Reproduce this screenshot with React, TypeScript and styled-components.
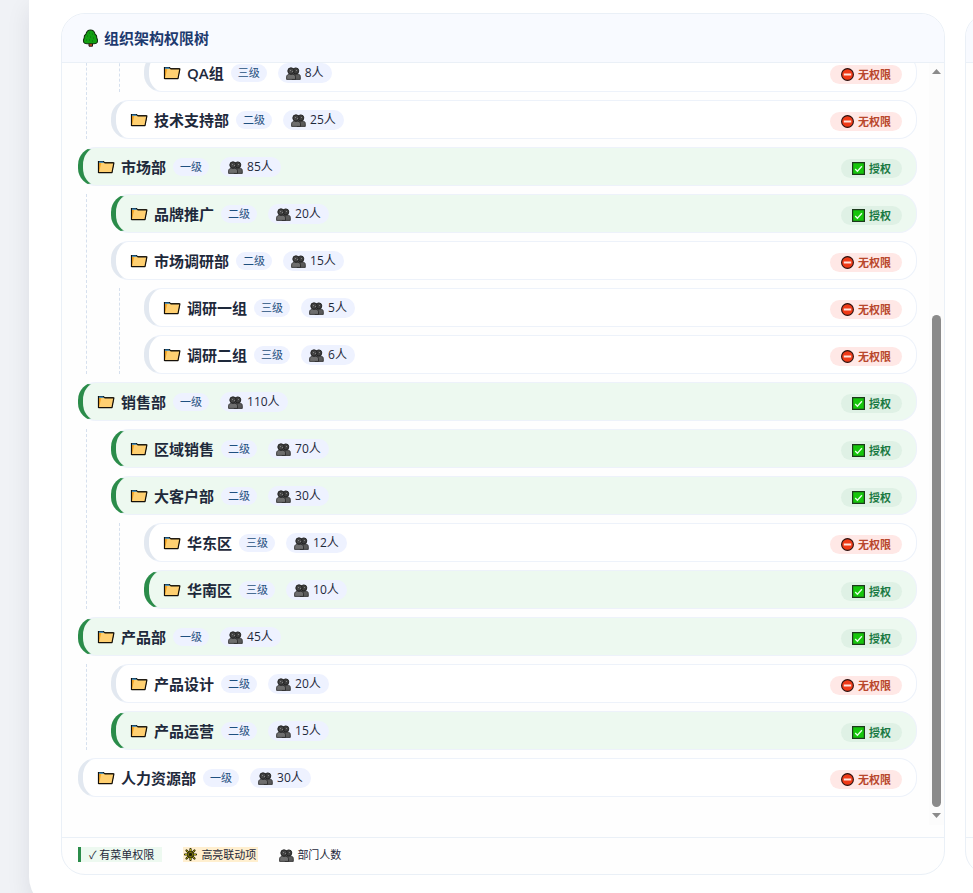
import React from "react";
import styled, { createGlobalStyle } from "styled-components";

const GlobalStyle = createGlobalStyle`
  *, *::before, *::after { box-sizing: border-box; }
  body {
    margin: 0;
    background: #f0f2f6;
    color: #1e293b;
    font-family: "Open Sans", "Noto Sans CJK SC", sans-serif;
    font-size: 12px;
  }
  ul { list-style: none; margin: 0; padding: 0; }
`;

const Page = styled.div`
  height: 100vh;
  padding-left: 29px;
  overflow: hidden;
`;

const Card = styled.main`
  padding: 13px 0 34px 32px;
  background: #ffffff;
  border-bottom-left-radius: 32px;
  box-shadow: 0 8px 24px rgba(15, 23, 42, 0.09);
`;

const Columns = styled.div`
  display: grid;
  grid-template-columns: minmax(0, 1fr) 8px;
  gap: 20px;
`;

const Panel = styled.section`
  display: flex;
  flex-direction: column;
  min-width: 200px;
  overflow: hidden;
  background: #fefefe;
  border: 1px solid #eaf0f7;
  border-radius: 24px;
`;

const PanelHeader = styled.header`
  display: flex;
  align-items: center;
  gap: 5px;
  height: 49px;
  flex: none;
  padding: 0 20px;
  background: #f8faff;
  border-bottom: 1px solid #eaf0f7;
`;

const PanelTitle = styled.h2`
  margin: 0;
  color: #1e3a6f;
  font-size: 15px;
  font-weight: 600;
  line-height: 22px;
`;

const PanelBody = styled.div`
  flex: 1;
  padding-bottom: 12px;
`;

const Viewport = styled.div`
  display: flex;
  overflow: hidden;
`;

const TreeRoot = styled.ul`
  display: flex;
  flex: 1;
  flex-direction: column;
  gap: 8px;
  min-width: 0;
  && {
    margin-top: -10px;
    padding: 0 12px 28px 16px;
  }
`;

const Branch = styled.ul`
  display: flex;
  flex-direction: column;
  gap: 8px;
  border-left: 1px dashed #d6e0ee;
  && {
    margin: 8px 0 0 8px;
    padding-left: 24px;
  }
`;

const FirstBranch = styled(Branch)`
  && {
    margin-top: 0;
  }
`;

const Row = styled.div<{ $granted: boolean }>`
  display: flex;
  align-items: center;
  height: 39px;
  padding: 0 14px;
  background: ${(p) => (p.$granted ? "#edf9f0" : "#ffffff")};
  border: 1px solid #edf2fa;
  border-left: 5px solid ${(p) => (p.$granted ? "#2b8c4a" : "#e2e8f0")};
  border-radius: 18px;
`;

const Name = styled.span`
  margin: 0 7px 0 6px;
  color: #1e293b;
  font-size: 15px;
  font-weight: 600;
  line-height: 20px;
`;

const LevelTag = styled.span`
  margin-right: 11px;
  padding: 0 7px;
  background: #eef2ff;
  border-radius: 20px;
  color: #1f5080;
  font-size: 11px;
  line-height: 18px;
`;

const CountTag = styled.span`
  display: flex;
  align-items: center;
  gap: 4px;
  padding: 0 8px;
  background: #eef2ff;
  border-radius: 20px;
  color: #1e293b;
  font-size: 12px;
  line-height: 20px;
`;

const Status = styled.span<{ $granted: boolean }>`
  display: flex;
  align-items: center;
  gap: 4px;
  margin: 4px 0 0 auto;
  padding: 0 11px;
  background: ${(p) => (p.$granted ? "#dff1e5" : "#ffe8e6")};
  border-radius: 20px;
  color: ${(p) => (p.$granted ? "#1b7a43" : "#b9472c")};
  font-size: 11px;
  font-weight: 600;
  line-height: 19px;
`;

const Scrollbar = styled.div`
  display: flex;
  flex-direction: column;
  align-items: center;
  width: 15px;
  padding: 6px 0 7px;
  background: #fcfcfc;
`;

const ScrollGap = styled.div`
  flex: 241;
`;

const Thumb = styled.div`
  flex: 492;
  width: 9px;
  margin-bottom: 6px;
  background: #8b8b8b;
  border-radius: 5px;
`;

const Legend = styled.footer`
  display: flex;
  align-items: flex-start;
  gap: 21px;
  height: 37px;
  flex: none;
  padding: 9px 16px 0;
  border-top: 1px solid #eaf0f7;
  color: #1e293b;
  font-size: 11px;
  line-height: 15px;
`;

const LEGEND_PADDING = { granted: "0 8px", linked: "0 2px 0 0", plain: "0" };
const LEGEND_BACKGROUND = { granted: "#edf9f0", linked: "#ffefcf", plain: "transparent" };

const LegendItem = styled.span<{ $kind: "granted" | "linked" | "plain" }>`
  display: flex;
  align-items: center;
  gap: 3px;
  padding: ${(p) => LEGEND_PADDING[p.$kind]};
  background: ${(p) => LEGEND_BACKGROUND[p.$kind]};
  border-left: ${(p) => (p.$kind === "granted" ? "3px solid #2b8c4a" : "0")};
`;

const Icon = styled.svg`
  display: block;
  flex: none;
`;

const TreeIcon = () => (
  <Icon width="17" height="18" viewBox="0 0 17 18" aria-hidden="true">
    <path d="M7 13.500h3.500v3.700H7z" fill="#d8451b" stroke="#1a1a1a" strokeWidth="1" />
    <path
      d="M8.500 1C11 1 12.500 3 13 5c1.500 1 2 2.500 1.800 4 .9 1.500 1.200 3 .5 4.200-.8 1.300-2.300 1.600-3.800 1.500h-6c-1.500.1-3-.2-3.800-1.500C1 12 1.300 10.500 2.200 9 2 7.500 2.500 6 4 5c.5-2 2-4 4.500-4z"
      fill="#12a012"
      stroke="#12300f"
      strokeWidth="1.100"
    />
    <path
      d="M7 4h1M10 5h1M5 7h1M8 8h1M11 9h1M4 11h1M7 11h1M10 12h1"
      stroke="#0c6b12"
      strokeWidth="1"
    />
  </Icon>
);

const FolderIcon = () => (
  <Icon width="18" height="15" viewBox="0 0 18 15" aria-hidden="true">
    <path d="M1.500 13.500V2.500h5l1.200 1.300H16v3l-1.500 6.700z" fill="#f9a825" stroke="#151008" strokeWidth="1.200" />
    <path d="M2 2.500h4l1 1.300H2z" fill="#1f86d8" />
    <path d="M4.300 3.900h12.600l-1.900 9.700H2z" fill="#ffd071" />
    <path d="M7.500 3.900h9.400l-1.900 9.700H1.500" fill="none" stroke="#151008" strokeWidth="1.200" strokeLinejoin="round" />
  </Icon>
);

const PeopleIcon = () => (
  <Icon width="15" height="14" viewBox="0 0 15 14" aria-hidden="true">
    <path d="M6 13.400V10.500C6 9 7 8 8.500 8h3c1.600 0 2.800 1 2.800 2.500v2.900z" fill="#5a5a5a" stroke="#262626" strokeWidth=".8" />
    <circle cx="9.800" cy="4.900" r="3" fill="#3f3f3f" stroke="#1d1d1d" strokeWidth=".9" />
    <path d="M.6 13.400v-2.600c0-1.500 1-2.400 2.600-2.400h3.600c1.600 0 2.700.9 2.700 2.400v2.600z" fill="#6e6e6e" stroke="#262626" strokeWidth=".8" />
    <circle cx="5" cy="5" r="3.200" fill="#444" stroke="#1d1d1d" strokeWidth=".9" />
    <path d="M4 4.500h1M6 5.500h1M10 4.500h1" stroke="#808080" strokeWidth="1" />
  </Icon>
);

const NoEntryIcon = () => (
  <Icon width="13" height="13" viewBox="0 0 13 13" aria-hidden="true">
    <circle cx="6.500" cy="6.500" r="5.900" fill="#f03a17" stroke="#2a1210" strokeWidth="1.100" />
    <path d="M2.800 5.500h7.400v2H2.800z" fill="#ffe3dc" />
  </Icon>
);

const CheckIcon = () => (
  <Icon width="13" height="13" viewBox="0 0 13 13" aria-hidden="true">
    <path d="M.6.6h11.800v11.800H.6z" fill="#16c60c" stroke="#1c3a1c" strokeWidth="1.200" />
    <path d="M3.200 7l2.200 2.200 4.500-4.900" fill="none" stroke="#eaffea" strokeWidth="1.300" />
  </Icon>
);

const SunIcon = () => (
  <Icon width="15" height="15" viewBox="0 0 15 15" aria-hidden="true">
    <path
      d="M7.500 2v11M2 7.500h11M3.500 3.500l8 8M11.500 3.500l-8 8"
      stroke="#2b2906"
      strokeWidth="2.200"
      strokeLinecap="round"
    />
    <path
      d="M7.500 2v11M2 7.500h11M3.500 3.500l8 8M11.500 3.500l-8 8"
      stroke="#d6c80c"
      strokeWidth=".8"
    />
    <circle cx="7.500" cy="7.500" r="3" fill="#8f8610" stroke="#2b2906" strokeWidth="1" />
    <circle cx="7.500" cy="7.500" r="1.700" fill="#1d1c05" />
  </Icon>
);

const Arrow = ({ down = false }: { down?: boolean }) => (
  <Icon width="9" height="5" viewBox="0 0 9 5" aria-hidden="true">
    <path d={down ? "M0 0h9L4.500 5z" : "M0 5h9L4.500 0z"} fill="#8b8b8b" />
  </Icon>
);

interface Department {
  name: string;
  people: number;
  granted: boolean;
  children?: Department[];
}

const LEVELS = ["一级", "二级", "三级"];

const QA_GROUP: Department = { name: "QA组", people: 8, granted: false };
const SUPPORT: Department = { name: "技术支持部", people: 25, granted: false };

const DEPARTMENTS: Department[] = [
  {
    name: "市场部",
    people: 85,
    granted: true,
    children: [
      { name: "品牌推广", people: 20, granted: true },
      {
        name: "市场调研部",
        people: 15,
        granted: false,
        children: [
          { name: "调研一组", people: 5, granted: false },
          { name: "调研二组", people: 6, granted: false },
        ],
      },
    ],
  },
  {
    name: "销售部",
    people: 110,
    granted: true,
    children: [
      { name: "区域销售", people: 70, granted: true },
      {
        name: "大客户部",
        people: 30,
        granted: true,
        children: [
          { name: "华东区", people: 12, granted: false },
          { name: "华南区", people: 10, granted: true },
        ],
      },
    ],
  },
  {
    name: "产品部",
    people: 45,
    granted: true,
    children: [
      { name: "产品设计", people: 20, granted: false },
      { name: "产品运营", people: 15, granted: true },
    ],
  },
  { name: "人力资源部", people: 30, granted: false },
];

const DepartmentNode = ({ item, level = 0 }: { item: Department; level?: number }) => (
  <li>
    <Row $granted={item.granted}>
      <FolderIcon />
      <Name>{item.name}</Name>
      <LevelTag>{LEVELS[level]}</LevelTag>
      <CountTag>
        <PeopleIcon />
        {item.people}人
      </CountTag>
      <Status $granted={item.granted}>
        {item.granted ? <CheckIcon /> : <NoEntryIcon />}
        {item.granted ? "授权" : "无权限"}
      </Status>
    </Row>
    {item.children && (
      <Branch>
        {item.children.map((child) => (
          <DepartmentNode key={child.name} item={child} level={level + 1} />
        ))}
      </Branch>
    )}
  </li>
);

export default function App() {
  return (
    <>
      <GlobalStyle />
      <Page>
        <Card>
          <Columns>
            <Panel>
              <PanelHeader>
                <TreeIcon />
                <PanelTitle>组织架构权限树</PanelTitle>
              </PanelHeader>
              <PanelBody>
                <Viewport>
                  <TreeRoot>
                    <li>
                      <FirstBranch>
                        <li>
                          <FirstBranch>
                            <DepartmentNode item={QA_GROUP} level={2} />
                          </FirstBranch>
                        </li>
                        <DepartmentNode item={SUPPORT} level={1} />
                      </FirstBranch>
                    </li>
                    {DEPARTMENTS.map((item) => (
                      <DepartmentNode key={item.name} item={item} />
                    ))}
                  </TreeRoot>
                  <Scrollbar>
                    <Arrow />
                    <ScrollGap />
                    <Thumb />
                    <Arrow down />
                  </Scrollbar>
                </Viewport>
              </PanelBody>
              <Legend>
                <LegendItem $kind="granted">✓ 有菜单权限</LegendItem>
                <LegendItem $kind="linked">
                  <SunIcon />
                  高亮联动项
                </LegendItem>
                <LegendItem $kind="plain">
                  <PeopleIcon />
                  部门人数
                </LegendItem>
              </Legend>
            </Panel>
            <Panel>
              <PanelHeader />
              <PanelBody />
              <Legend />
            </Panel>
          </Columns>
        </Card>
      </Page>
    </>
  );
}
